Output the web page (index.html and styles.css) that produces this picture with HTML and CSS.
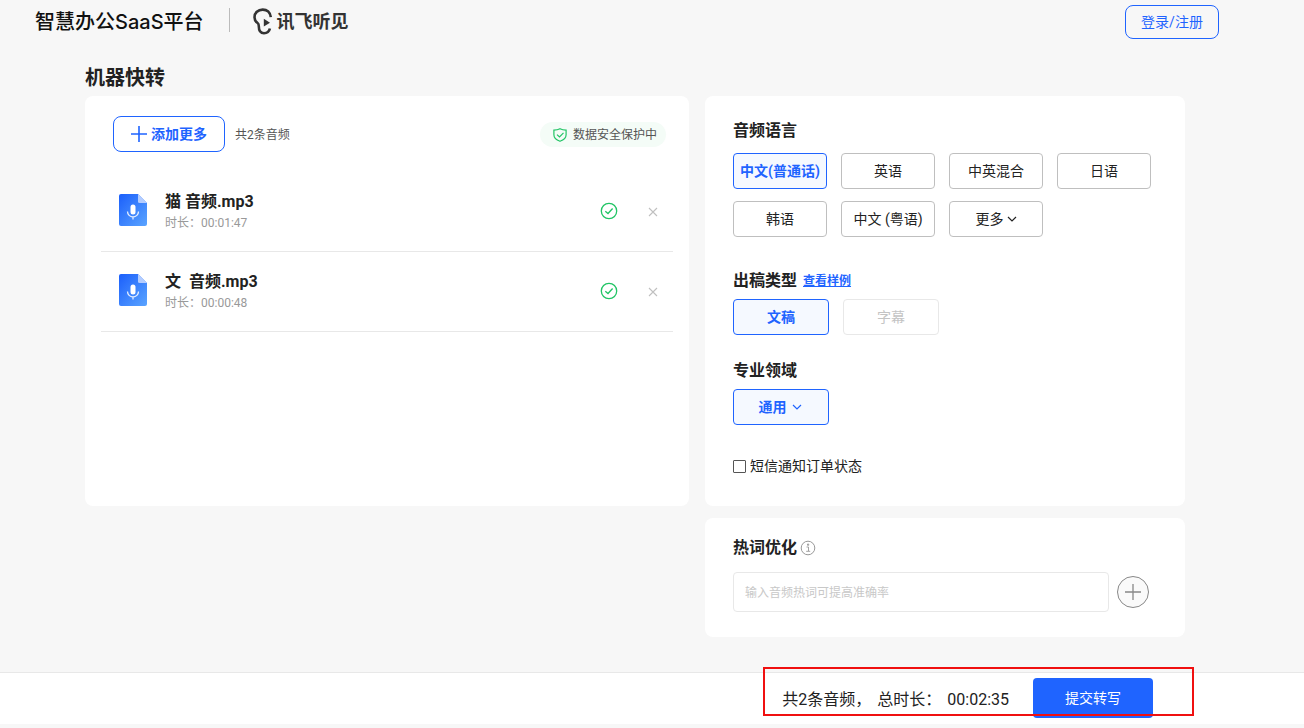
FILE: index.html
```html
<!DOCTYPE html>
<html lang="zh-CN">
<head>
<meta charset="utf-8">
<title>机器快转</title>
<link rel="stylesheet" href="styles.css">
</head>
<body>
<svg class="defs" width="0" height="0" aria-hidden="true">
  <defs>
    <linearGradient id="file-fill" x1="0" y1="0" x2="1" y2="1">
      <stop offset="0" stop-color="#1b5ffb"/>
      <stop offset="1" stop-color="#5aa4ff"/>
    </linearGradient>
    <symbol id="icon-file" viewBox="0 0 28 32">
      <path d="M2 0h17l9 9v21a2 2 0 0 1-2 2H2a2 2 0 0 1-2-2V2a2 2 0 0 1 2-2z" fill="url(#file-fill)"/>
      <path d="M19 0l9 9h-7.500a1.500 1.500 0 0 1-1.500-1.500z" fill="#b4cdff"/>
      <rect x="11.500" y="10.500" width="5" height="10" rx="2.500" fill="#fff"/>
      <path d="M8.500 17.500a5.500 5.500 0 0 0 11 0M14 23v2.500" fill="none" stroke="#e4eeff" stroke-width="1.300"/>
    </symbol>
    <symbol id="icon-done" viewBox="0 0 18 18">
      <circle cx="9" cy="9" r="7.700" fill="none" stroke="#21c465" stroke-width="1.300"/>
      <path d="M5.300 9.300l2.700 2.200 4.600-5" fill="none" stroke="#21c465" stroke-width="1.300"/>
    </symbol>
    <symbol id="icon-close" viewBox="0 0 10 10">
      <path d="M1 1l8 8M9 1l-8 8" fill="none" stroke="#c0c0c0" stroke-width="1.100"/>
    </symbol>
    <symbol id="icon-down" viewBox="0 0 10 10">
      <path d="M1 3l4 4 4-4" fill="none" stroke="currentColor" stroke-width="1.200"/>
    </symbol>
  </defs>
</svg>

<header class="topbar">
  <span class="platform">智慧办公SaaS平台</span>
  <span class="divider"></span>
  <span class="brand">
    <svg class="brand-logo" viewBox="0 0 20 27" aria-hidden="true">
      <path d="M17.800 9.200C17.300 4.300 14 1.600 9.700 1.600 5 1.600 1.500 4.900 1.500 9.200c0 3 1.300 4.600 3.100 5.800 1 .7 1.200 1.500 1.200 3.200 0 4.600 1.600 7 5.200 7 3.200 0 5.200-1.600 5.900-4.700" fill="none" stroke="#333" stroke-width="2.600"/>
      <path d="M10.800 10.800l6.200 3.900-6.200 3.900z" fill="#333"/>
    </svg>
    讯飞听见
  </span>
  <button class="login" type="button">登录/注册</button>
</header>

<main class="page">
  <h1 class="page-title">机器快转</h1>
  <div class="columns">
    <section class="card files">
      <div class="files-head">
        <button class="add" type="button">
          <svg class="icon-16" viewBox="0 0 16 16" aria-hidden="true"><path d="M8 0v16M0 8h16" stroke="currentColor" stroke-width="1.600"/></svg>
          添加更多
        </button>
        <span class="count">共2条音频</span>
        <span class="safe">
          <svg class="icon-14" viewBox="0 0 14 14" aria-hidden="true"><path d="M7 .7c1.800 1 3.900 1.400 6.100 1.400v4.700c0 3.200-2.500 5.300-6.100 6.500C3.400 12.100.9 10 .9 6.800V2.100C3.100 2.100 5.200 1.700 7 .7zM4 6.600l2.500 2.300 4-4" fill="none" stroke="#21c465" stroke-width="1.200"/></svg>
          数据安全保护中
        </span>
      </div>
      <ul class="file-list">
        <li class="file">
          <svg class="file-icon" aria-hidden="true"><use href="#icon-file"/></svg>
          <div class="file-text">
            <div class="file-name">猫 音频.mp3</div>
            <div class="file-time">时长：00:01:47</div>
          </div>
          <svg class="done" aria-hidden="true"><use href="#icon-done"/></svg>
          <button class="remove" type="button" aria-label="删除"><svg class="icon-10"><use href="#icon-close"/></svg></button>
        </li>
        <li class="file">
          <svg class="file-icon" aria-hidden="true"><use href="#icon-file"/></svg>
          <div class="file-text">
            <div class="file-name">文&nbsp; 音频.mp3</div>
            <div class="file-time">时长：00:00:48</div>
          </div>
          <svg class="done" aria-hidden="true"><use href="#icon-done"/></svg>
          <button class="remove" type="button" aria-label="删除"><svg class="icon-10"><use href="#icon-close"/></svg></button>
        </li>
      </ul>
    </section>

    <div class="side">
      <section class="card settings">
        <h2 class="heading">音频语言</h2>
        <div class="options languages">
          <button class="option active" type="button">中文(普通话)</button>
          <button class="option" type="button">英语</button>
          <button class="option" type="button">中英混合</button>
          <button class="option" type="button">日语</button>
          <button class="option" type="button">韩语</button>
          <button class="option" type="button">中文 (粤语)</button>
          <button class="option" type="button">更多<svg class="icon-10" aria-hidden="true"><use href="#icon-down"/></svg></button>
        </div>
        <h2 class="heading">出稿类型 <a class="sample" href="#">查看样例</a></h2>
        <div class="options types">
          <button class="option wide active" type="button">文稿</button>
          <button class="option wide" type="button" disabled>字幕</button>
        </div>
        <h2 class="heading">专业领域</h2>
        <div class="options fields">
          <button class="option wide active field" type="button">通用<svg class="icon-10" aria-hidden="true"><use href="#icon-down"/></svg></button>
        </div>
        <label class="notify"><input class="check" type="checkbox">短信通知订单状态</label>
      </section>

      <section class="card hotwords">
        <h2 class="heading"><label for="hotword">热词优化</label>
          <svg class="info" viewBox="0 0 16 16" aria-hidden="true"><circle cx="8" cy="8" r="6.800" fill="none" stroke="#999"/><path d="M7.500 4h1.200v1.300H7.500zM6.500 7h2v4M6.200 11.300h4" fill="none" stroke="#999" stroke-width=".9"/></svg>
        </h2>
        <div class="hotword-row">
          <input class="hotword" id="hotword" type="text" placeholder="输入音频热词可提高准确率">
          <button class="plus" type="button" aria-label="添加热词"><svg class="icon-16" viewBox="0 0 16 16"><path d="M8 0v16M0 8h16" stroke="#888" stroke-width="1.300"/></svg></button>
        </div>
      </section>
    </div>
  </div>
</main>

<footer class="bottom">
  <div class="summary">
    <div class="totals">
      <span>共2条音频，</span>
      <span>总时长：</span>
      <span>00:02:35</span>
    </div>
    <button class="submit" type="button">提交转写</button>
    <span class="marker"></span>
  </div>
</footer>
</body>
</html>
```
FILE: styles.css
```css
* { box-sizing: border-box; }

body {
  margin: 0;
  min-height: 100vh;
  display: flex;
  flex-direction: column;
  background: #f7f7f7;
  color: #222;
  font: 14px/20px Roboto, "Noto Sans CJK SC", sans-serif;
}

button, input { font: inherit; color: inherit; margin: 0; }
button { padding: 0; background: none; border: 0; cursor: pointer; }
h1, h2, ul { margin: 0; padding: 0; }
svg { display: block; flex: none; }

.defs { position: absolute; }
.icon-10 { width: 10px; height: 10px; }
.icon-14 { width: 14px; height: 14px; }
.icon-16 { width: 16px; height: 16px; }

.topbar {
  display: flex;
  align-items: center;
  height: 44px;
  padding: 0 85px 0 35px;
}
.platform {
  color: #111;
  font: 500 20px/24px Inter, "Noto Sans CJK SC", sans-serif;
}
.divider { width: 1px; height: 24px; margin: 0 23px 4px 25px; background: #bbb; }
.brand {
  display: flex;
  align-items: center;
  gap: 4px;
  color: #333;
  font-size: 18px;
  font-weight: 700;
  line-height: 24px;
}
.brand-logo { width: 20px; height: 27px; margin-bottom: 2px; }
.login {
  width: 94px;
  height: 34px;
  margin-left: auto;
  border: 1px solid #1f64ff;
  border-radius: 8px;
  color: #1f64ff;
}

.page { flex: 1; padding: 19px 119px 35px 85px; }
.page-title { font-size: 20px; line-height: 30px; margin-bottom: 3px; }
.columns {
  display: grid;
  grid-template-columns: minmax(0, 1fr) 480px;
  gap: 16px;
  align-items: start;
}
.card { background: #fff; border-radius: 8px; }

.files { min-height: 410px; padding: 20px 16px; }
.files-head { display: flex; align-items: center; padding: 0 7px 0 12px; }
.add {
  display: flex;
  align-items: center;
  justify-content: center;
  gap: 4px;
  width: 112px;
  height: 36px;
  border: 1px solid #1f64ff;
  border-radius: 8px;
  color: #1f64ff;
  font-weight: 700;
}
.count { margin-left: 10px; padding-top: 2px; font-size: 12px; color: #555; }
.safe {
  display: flex;
  align-items: center;
  gap: 6px;
  height: 25px;
  margin-left: auto;
  padding: 1px 9px 0 13px;
  border-radius: 13px;
  background: #f4fcf7;
  color: #555;
  font-size: 12px;
}
.file-list { list-style: none; margin-top: 20px; }
.file {
  display: flex;
  align-items: center;
  height: 80px;
  padding: 0 15px 2px 18px;
  border-bottom: 1px solid #e8e8e8;
}
.file-icon { width: 28px; height: 32px; margin: 0 18px 2px 0; }
.file-text { flex: 1; }
.file-name { font-size: 16px; font-weight: 700; line-height: 24px; }
.file-time { font-size: 12px; line-height: 18px; color: #999; }
.done { width: 18px; height: 18px; }
.remove { margin-left: 30px; padding-top: 2px; }

.side { display: grid; gap: 12px; }
.settings { min-height: 410px; padding: 23px 28px 22px; }
.heading {
  display: flex;
  align-items: center;
  font-size: 16px;
  line-height: 24px;
}
.options { display: flex; flex-wrap: wrap; gap: 12px 14px; }
.languages { margin: 10px 0 32px; }
.types { margin: 6px 0 24px; }
.fields { margin: 6px 0 31px; }
.option {
  display: flex;
  align-items: center;
  justify-content: center;
  gap: 3px;
  width: 94px;
  height: 36px;
  border: 1px solid #bfbfbf;
  border-radius: 4px;
  background: #fff;
}
.option.wide { width: 96px; }
.option.field { gap: 5px; padding-right: 2px; }
.option.active {
  border-color: #1f64ff;
  background: #f5f9ff;
  color: #1f64ff;
  font-weight: 700;
}
.option:disabled { border-color: #e8e8e8; color: #c4c4c4; cursor: default; }
.sample { margin-left: 6px; font-size: 12px; color: #1f64ff; }
.notify { display: flex; align-items: center; gap: 4px; }
.check {
  appearance: none;
  width: 13px;
  height: 13px;
  border: 1px solid #555;
  border-radius: 1px;
  background: #fff;
}
.check:checked { background: #1f64ff; border-color: #1f64ff; }

.hotwords { padding: 18px 36px 25px 28px; }
.info { width: 16px; height: 16px; margin-left: 3px; }
.hotword-row { display: flex; align-items: center; gap: 8px; margin-top: 12px; }
.hotword {
  flex: 1;
  min-width: 0;
  height: 40px;
  padding: 1px 11px 0;
  border: 1px solid #e8e8e8;
  border-radius: 4px;
  font-size: 12px;
}
.hotword::placeholder { color: #c8c8c8; }
.plus {
  display: flex;
  align-items: center;
  justify-content: center;
  width: 32px;
  height: 32px;
  border: 1px solid #888;
  border-radius: 50%;
  background: #fafafa;
}

.bottom {
  display: flex;
  justify-content: flex-end;
  height: 52px;
  margin-bottom: 4px;
  padding: 0 151px 1px 16px;
  border-top: 1px solid #e8e8e8;
  background: #fff;
}
.summary {
  position: relative;
  display: flex;
  align-items: center;
  gap: 24px;
  font-size: 16px;
}
.totals { display: flex; gap: 6px; padding-top: 4px; }
.submit {
  width: 120px;
  height: 40px;
  border-radius: 4px;
  background: #1f64ff;
  color: #fff;
  font-size: 14px;
}
.marker {
  position: absolute;
  inset: -6px -41px 7px -19px;
  border: 2px solid #f01010;
  pointer-events: none;
}
```
